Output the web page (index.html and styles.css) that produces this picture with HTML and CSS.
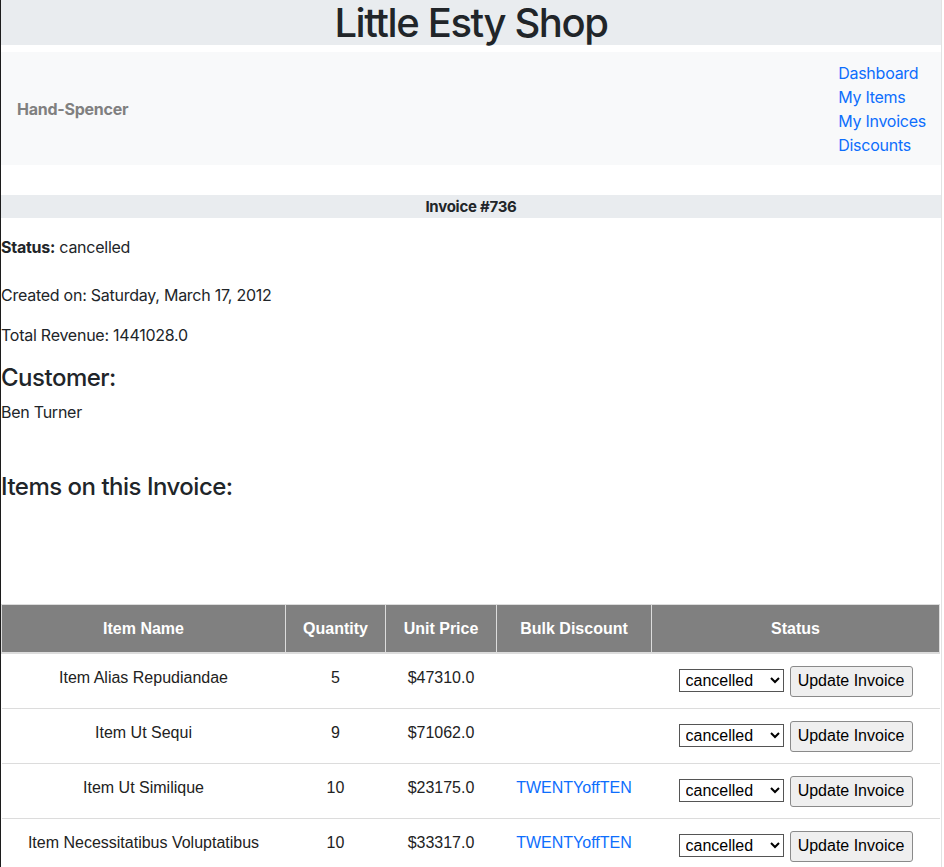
FILE: index.html
```html
<!DOCTYPE html>
<html lang="en">
<head>
<meta charset="utf-8">
<title>Little Esty Shop</title>
<link rel="stylesheet" href="styles.css">
</head>
<body>
<div class="page">
  <header class="site-header">
    <h1 class="site-title">Little Esty Shop</h1>
  </header>
  <nav class="merchant-nav">
    <span class="merchant-name">Hand-Spencer</span>
    <ul class="nav-links">
      <li><a href="#">Dashboard</a></li>
      <li><a href="#">My Items</a></li>
      <li><a href="#">My Invoices</a></li>
      <li><a href="#">Discounts</a></li>
    </ul>
  </nav>

  <div class="invoice-bar">Invoice #736</div>

  <section class="invoice-info">
    <p class="status-line"><strong>Status:</strong> cancelled</p>
    <p class="created-line">Created on: Saturday, March 17, 2012</p>
    <p class="revenue-line">Total Revenue: 1441028.0</p>
    <h4 class="section-heading">Customer:</h4>
    <p class="customer-name">Ben Turner</p>
    <h4 class="section-heading items-heading">Items on this Invoice:</h4>
  </section>

  <table class="items-table">
    <colgroup>
      <col class="c-name">
      <col class="c-qty">
      <col class="c-price">
      <col class="c-disc">
      <col class="c-status">
    </colgroup>
    <thead>
      <tr>
        <th>Item Name</th>
        <th>Quantity</th>
        <th>Unit Price</th>
        <th>Bulk Discount</th>
        <th>Status</th>
      </tr>
    </thead>
    <tbody>
      <tr>
        <td>Item Alias Repudiandae</td>
        <td>5</td>
        <td>$47310.0</td>
        <td></td>
        <td class="status-cell"><form class="status-form"><select class="status-select"><option>pending</option><option selected>cancelled</option><option>completed</option></select><button type="button" class="update-btn">Update Invoice</button></form></td>
      </tr>
      <tr>
        <td>Item Ut Sequi</td>
        <td>9</td>
        <td>$71062.0</td>
        <td></td>
        <td class="status-cell"><form class="status-form"><select class="status-select"><option>pending</option><option selected>cancelled</option><option>completed</option></select><button type="button" class="update-btn">Update Invoice</button></form></td>
      </tr>
      <tr>
        <td>Item Ut Similique</td>
        <td>10</td>
        <td>$23175.0</td>
        <td><a href="#" class="discount-link">TWENTYoffTEN</a></td>
        <td class="status-cell"><form class="status-form"><select class="status-select"><option>pending</option><option selected>cancelled</option><option>completed</option></select><button type="button" class="update-btn">Update Invoice</button></form></td>
      </tr>
      <tr>
        <td>Item Necessitatibus Voluptatibus</td>
        <td>10</td>
        <td>$33317.0</td>
        <td><a href="#" class="discount-link">TWENTYoffTEN</a></td>
        <td class="status-cell"><form class="status-form"><select class="status-select"><option>pending</option><option selected>cancelled</option><option>completed</option></select><button type="button" class="update-btn">Update Invoice</button></form></td>
      </tr>
    </tbody>
  </table>
</div>
</body>
</html>
```

FILE: styles.css
```css
html, body {
  margin: 0;
  padding: 0;
  background: #fff;
}

body {
  font-family: "Inter", "Liberation Sans", sans-serif;
  font-size: 16px;
  line-height: 24px;
  letter-spacing: -0.25px;
  color: #212529;
}

.page {
  width: 940px;
  min-height: 867px;
  border-left: 1px solid #1c1c1c;
  border-right: 1px solid #e2e2e2;
  box-sizing: content-box;
}

.site-header {
  background: #e9ecef;
  height: 45px;
}

.site-title {
  margin: 0;
  font-size: 40px;
  line-height: 45px;
  font-weight: 500;
  letter-spacing: -1.4px;
  text-align: center;
  color: #212529;
}

.merchant-nav {
  margin-top: 7px;
  background: #f8f9fa;
  display: flex;
  align-items: center;
  justify-content: space-between;
  padding: 9px 15px 8px 16px;
}

.merchant-name {
  font-weight: 700;
  color: #808080;
}

.nav-links {
  list-style: none;
  margin: 0;
  padding: 0;
  white-space: nowrap;
}

.nav-links a {
  color: #0d6efd;
  text-decoration: none;
}

.invoice-bar {
  margin-top: 30px;
  background: #e9ecef;
  height: 23px;
  line-height: 23px;
  text-align: center;
  font-weight: 700;
  font-size: 15px;
}

.invoice-info p {
  margin: 0;
}

.status-line {
  padding-top: 17px;
}

.invoice-info .created-line {
  margin-top: 24px;
}

.invoice-info .revenue-line {
  margin-top: 16px;
}

.section-heading {
  margin: 16px 0 8px 0;
  font-size: 24px;
  line-height: 29px;
  font-weight: 500;
  letter-spacing: -0.5px;
}

.items-heading {
  margin-top: 48px;
  margin-bottom: 0;
}

.items-table {
  margin-top: 103px;
  width: 939px;
  border-collapse: collapse;
  font-family: "Liberation Sans", Arial, sans-serif;
  font-size: 16px;
  letter-spacing: 0;
  color: #222;
  table-layout: fixed;
}

.c-name { width: 284px; }
.c-qty { width: 100px; }
.c-price { width: 111px; }
.c-disc { width: 155px; }

.items-table th {
  background: #808080;
  color: #fff;
  font-weight: 700;
  height: 47px;
  padding: 0 8px;
  border: 1px solid #dcdcdc;
  border-bottom-width: 2px;
  text-align: center;
}

.items-table td {
  height: 48px;
  padding: 0 8px 6px 8px;
  border-bottom: 1px solid #dcdcdc;
  text-align: center;
  vertical-align: middle;
}

.items-table td.status-cell {
  padding: 0 8px;
}

.discount-link {
  color: #0d6efd;
  text-decoration: none;
}

.status-form {
  display: flex;
  justify-content: center;
  align-items: center;
  gap: 6px;
  margin: 0;
}

.status-select {
  width: 105px;
  height: 23px;
  font-family: "Liberation Sans", Arial, sans-serif;
  font-size: 16px;
  color: #000;
  background: #fff;
  border: 1px solid #555;
  border-radius: 0;
  padding: 0 2px;
  margin-bottom: 1px;
}

.update-btn {
  width: 123px;
  height: 31px;
  font-family: "Liberation Sans", Arial, sans-serif;
  font-size: 16px;
  color: #000;
  background: #efefef;
  border: 1px solid #8a8a8a;
  border-radius: 3px;
  padding: 0 6px;
}
```
